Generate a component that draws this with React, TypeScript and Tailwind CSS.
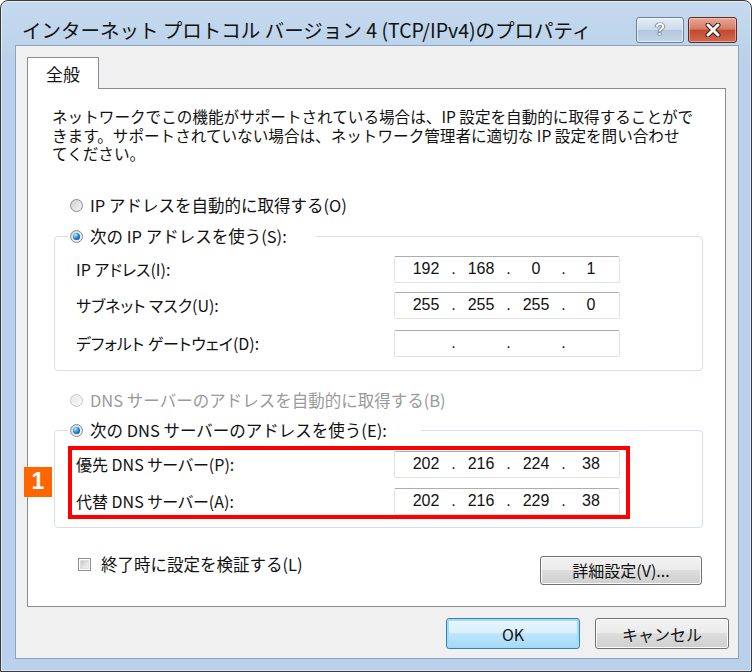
import { Fragment } from "react";

function Radio({ checked, disabled }: { checked?: boolean; disabled?: boolean }) {
  return (
    <span
      className={`w-[13px] h-[13px] rounded-full border flex items-center justify-center shrink-0 ${
        disabled
          ? "border-[#c8c8c8] bg-[linear-gradient(135deg,#e8e8e8,#fafafa)]"
          : "border-[#8a8a8a] bg-[linear-gradient(135deg,#d0d0d0,#f7f7f7)]"
      }`}
    >
      {checked && (
        <span className="w-[7px] h-[7px] rounded-full bg-[radial-gradient(circle_at_35%_30%,#c8f0ff_0%,#3aa0e8_35%,#0b4f9a_80%)]" />
      )}
    </span>
  );
}

function IpField({ parts }: { parts?: string[] }) {
  const segs = parts ?? ["", "", "", ""];
  return (
    <div className="w-[226px] h-[27px] bg-white border border-[#dfe3e8] border-t-[#abadb3] rounded-[2px] flex items-center pl-[9px] font-['Liberation_Sans',sans-serif] text-[16px] text-[#111]">
      {segs.map((s, i) => (
        <Fragment key={i}>
          <span className="w-[44px] text-center">{s}</span>
          {i < 3 && <span className="w-[11px] text-center">.</span>}
        </Fragment>
      ))}
    </div>
  );
}

function Row({ label, parts, className = "" }: { label: string; parts?: string[]; className?: string }) {
  return (
    <div className={`flex items-center ${className}`}>
      <span className="w-[318px] [font-feature-settings:'palt']">{label}</span>
      <IpField parts={parts} />
    </div>
  );
}

const BTN =
  "rounded-[3px] border border-[#707070] bg-[linear-gradient(#f2f2f2_0%,#ebebeb_49%,#dddddd_50%,#cfcfcf_100%)] shadow-[inset_0_0_0_1px_#fbfbfb] flex items-center justify-center";

export default function App() {
  return (
    <div className="w-[752px] h-[672px] bg-white">
      <div className="w-[752px] h-[672px] flex flex-col border border-[#3a3a3a] rounded-t-[8px] bg-[linear-gradient(#c6daee,#b9d1ea_60px)] shadow-[inset_0_0_0_1px_rgba(255,255,255,0.55)] font-['Noto_Sans_CJK_JP',sans-serif] text-[#111]">
        {/* title bar */}
        <div className="h-[44px] flex items-center pt-[13px] pl-[21px] pr-[14px]">
          <span className="text-[19.5px] flex-1 whitespace-nowrap">
            インターネット プロトコル バージョン 4 (TCP/IPv4)のプロパティ
          </span>
          <div className="flex gap-[4px]">
            <div className="w-[48px] h-[26px] rounded-[3px] border border-[#6b7f99] bg-[linear-gradient(#e4edf7_0%,#ccdbeb_48%,#b3c7de_52%,#c3d5e9_100%)] shadow-[inset_0_0_0_1px_rgba(255,255,255,0.6)] flex items-center justify-center">
              <span className="font-['Liberation_Sans',sans-serif] font-bold text-[17px] text-white [text-shadow:0_0_1px_#2a3a50,0_0_1px_#2a3a50,0_0_1px_#2a3a50]">
                ?
              </span>
            </div>
            <div className="w-[49px] h-[26px] rounded-[3px] border border-[#5b2a22] bg-[linear-gradient(#e8a795_0%,#d77c66_45%,#c24a31_52%,#d06a4e_100%)] shadow-[inset_0_0_0_1px_rgba(255,220,210,0.5)] flex items-center justify-center">
              <svg width="18" height="14" viewBox="0 0 18 14">
                <path d="M4 2 L14 12 M14 2 L4 12" stroke="#3c1a14" strokeWidth="5" strokeLinecap="round" />
                <path d="M4 2 L14 12 M14 2 L4 12" stroke="#ffffff" strokeWidth="3" strokeLinecap="round" />
              </svg>
            </div>
          </div>
        </div>

        {/* client */}
        <div className="flex-1 ml-[14px] mr-[12px] mb-[12px] bg-[#f0f0f0] border border-[#8ea4bd] flex flex-col">
          <div className="pt-[11px] pl-[11px] flex">
            <div className="relative z-10 w-[72px] h-[32px] -mb-[1px] bg-white border border-b-0 border-[#898c95] flex items-center justify-center text-[17px]">
              全般
            </div>
          </div>

          <div className="relative ml-[11px] mr-[12px] h-[519px] bg-white border border-[#898c95] pt-[18px] text-[16px]">
            <p className="pl-[24px] leading-[18.5px] whitespace-nowrap text-[15.6px]">
              ネットワークでこの機能がサポートされている場合は、IP 設定を自動的に取得することがで
              <br />
              きます。サポートされていない場合は、ネットワーク管理者に適切な IP 設定を問い合わせ
              <br />
              てください。
            </p>

            <div className="mt-[33px] ml-[42px] h-[20px] flex items-center gap-[7px] text-[16.5px]">
              <Radio />
              <span>IP アドレスを自動的に取得する(O)</span>
            </div>

            <fieldset className="mt-[11px] ml-[26px] w-[649px] rounded-[4px] border border-[#d5dfe5] pl-[21px] pt-[9px] pb-[13px]">
              <legend className="-ml-[8px] pl-[2px] w-[248px] h-[20px] flex items-center gap-[7px] text-[16.5px]">
                <Radio checked />
                <span>次の IP アドレスを使う(S):</span>
              </legend>
              <Row label="IP アドレス(I):" parts={["192", "168", "0", "1"]} />
              <Row label="サブネット マスク(U):" parts={["255", "255", "255", "0"]} className="mt-[9px]" />
              <Row label="デフォルト ゲートウェイ(D):" className="mt-[11px]" />
            </fieldset>

            <div className="mt-[20px] ml-[42px] h-[20px] flex items-center gap-[7px] text-[16.5px] text-[#9a9a9a]">
              <Radio disabled />
              <span>DNS サーバーのアドレスを自動的に取得する(B)</span>
            </div>

            <fieldset className="mt-[10px] ml-[26px] w-[649px] rounded-[4px] border border-[#d5dfe5] pl-[21px] pt-[10px] pb-[12px]">
              <legend className="-ml-[8px] pl-[2px] w-[353px] h-[20px] flex items-center gap-[7px] text-[16.5px]">
                <Radio checked />
                <span>次の DNS サーバーのアドレスを使う(E):</span>
              </legend>
              <div className="relative">
                <Row label="優先 DNS サーバー(P):" parts={["202", "216", "224", "38"]} />
                <Row label="代替 DNS サーバー(A):" parts={["202", "216", "229", "38"]} className="mt-[10px]" />
                <div className="absolute -left-[8px] -top-[5px] w-[562px] h-[73px] border-[4px] border-[#ff0000]" />
                <div className="absolute -left-[52px] top-[16px] w-[28px] h-[30px] bg-[#ff6600] flex items-center justify-center text-white font-['Liberation_Sans',sans-serif] font-bold text-[23px]">
                  1
                </div>
              </div>
            </fieldset>

            <div className="mt-[27px] flex justify-between pr-[23px]">
              <div className="ml-[50px] h-[20px] flex items-center gap-[10px] text-[16.5px]">
                <span className="w-[13px] h-[13px] border border-[#8f8f8f] bg-white flex items-center justify-center">
                  <span className="w-[9px] h-[9px] bg-[linear-gradient(135deg,#c8c8c8,#f4f4f4)] border border-[#dcdcdc]" />
                </span>
                <span>終了時に設定を検証する(L)</span>
              </div>
              <div className={`mt-[1px] w-[162px] h-[29px] ${BTN}`}>詳細設定(V)...</div>
            </div>
          </div>

          <div className="mt-[11px] flex justify-end gap-[15px] pr-[9px]">
            <div className="w-[134px] h-[31px] rounded-[3px] border border-[#3c7fb1] bg-[linear-gradient(#eaf6fd_0%,#d9f0fc_49%,#bee6fd_50%,#a7d9f5_100%)] shadow-[inset_0_0_0_2px_#9fdcf7] flex items-center justify-center text-[16px]">
              OK
            </div>
            <div className={`w-[134px] h-[31px] text-[16px] ${BTN}`}>キャンセル</div>
          </div>
        </div>
      </div>
    </div>
  );
}
